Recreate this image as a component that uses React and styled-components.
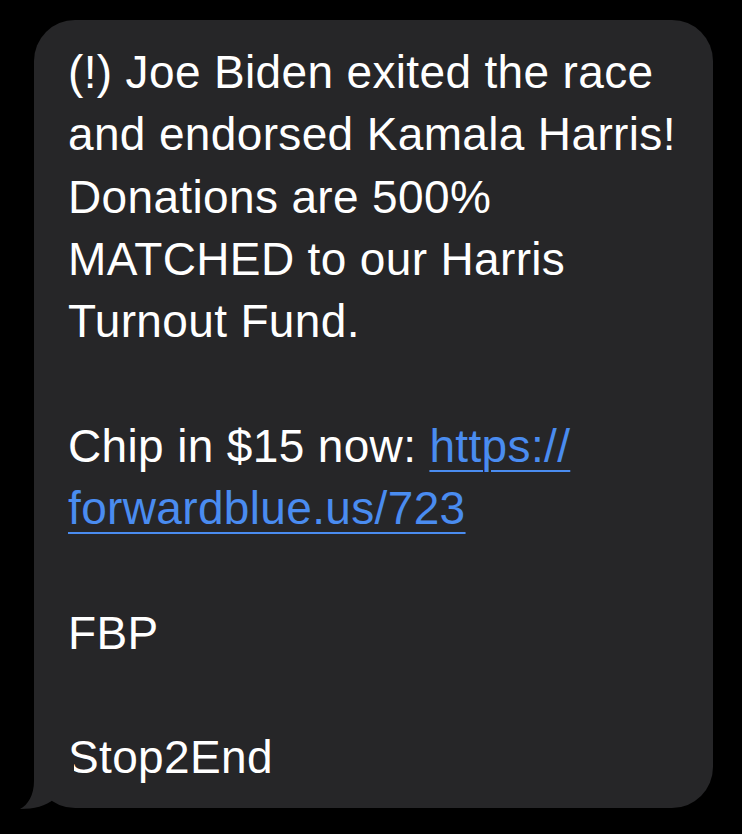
import styled, { createGlobalStyle } from "styled-components";

const GlobalStyle = createGlobalStyle`
  html, body {
    margin: 0;
    padding: 0;
    background: #000;
  }
  body {
    font-family: "Liberation Sans", Arial, sans-serif;
    -webkit-font-smoothing: antialiased;
  }
`;

const Screen = styled.div`
  min-height: 834px;
  padding: 20px 29px 0 34px;
  box-sizing: border-box;
  background: #000;
`;

const Bubble = styled.div`
  position: relative;
  width: 679px;
  box-sizing: border-box;
  padding: 21px 16px 19px 34px;
  background: #262628;
  border-radius: 41px;
  color: #fff;
  font-size: 46px;
  line-height: 62.3px;
  letter-spacing: 0.35px;
  display: flex;
  flex-direction: column;
  gap: 62.3px;
`;

const Tail = styled.svg`
  position: absolute;
  left: -16px;
  bottom: -3px;
  width: 58px;
  height: 50px;
  display: block;
`;

const Para = styled.p`
  margin: 0;
  white-space: nowrap;
`;

const Link = styled.a`
  color: #4a8cf0;
  text-decoration: underline;
  text-decoration-thickness: 2px;
  text-underline-offset: 8px;
`;

const App = () => {
  return (
    <>
      <GlobalStyle />
      <Screen>
        <Bubble>
          <Para>
            (!) Joe Biden exited the race
            <br />
            and endorsed Kamala Harris!
            <br />
            Donations are 500%
            <br />
            MATCHED to our Harris
            <br />
            Turnout Fund.
          </Para>
          <Para>
            Chip in $15 now: <Link href="#">https://</Link>
            <br />
            <Link href="#">forwardblue.us/723</Link>
          </Para>
          <Para>FBP</Para>
          <Para>Stop2End</Para>
          <Tail viewBox="0 0 58 50">
            <path
              d="M16 0 L16 20 C16 34 10 44 2 48 C16 48 28 45 36 38 L56 20 L56 0 Z"
              fill="#262628"
            />
          </Tail>
        </Bubble>
      </Screen>
    </>
  );
};

export default App;
